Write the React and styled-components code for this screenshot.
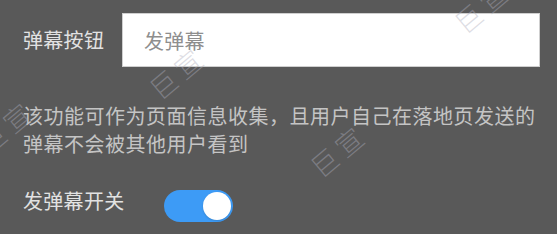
import { useState } from "react";
import styled, { createGlobalStyle } from "styled-components";

const GlobalStyle = createGlobalStyle`
  html, body {
    margin: 0;
    padding: 0;
    background: #595959;
  }
  body {
    font-family: "Noto Sans CJK SC", "Noto Sans", sans-serif;
  }
`;

const Panel = styled.div`
  position: relative;
  width: 557px;
  height: 234px;
  box-sizing: border-box;
  padding: 13px 17px 0 23px;
  overflow: hidden;
`;

const FieldRow = styled.div`
  display: flex;
  align-items: center;
  height: 54px;
`;

const Label = styled.span`
  flex: none;
  width: ${({ $width }) => $width}px;
  font-size: 20px;
  line-height: 28px;
  letter-spacing: 0.3px;
  color: #e2e2e2;
  white-space: nowrap;
`;

const TextInput = styled.input`
  flex: 1;
  min-width: 0;
  height: 54px;
  box-sizing: border-box;
  border: 1px solid #cfcfcf;
  background: #fff;
  padding: 0 0 0 21px;
  margin: 0;
  outline: none;
  font-family: inherit;
  font-size: 20px;
  letter-spacing: 0.3px;
  color: #333;

  &::placeholder {
    color: #8e8e8e;
  }
`;

const Hint = styled.p`
  margin: 35px 0 0;
  font-size: 20px;
  line-height: 28px;
  letter-spacing: 0.5px;
  color: #c4c4c4;
`;

const SwitchRow = styled.div`
  display: flex;
  align-items: flex-start;
  margin-top: 29px;
`;

const Track = styled.button`
  position: relative;
  flex: none;
  width: 69px;
  height: 32px;
  margin-top: 3px;
  padding: 0;
  border: none;
  border-radius: 16px;
  background: ${({ $on }) => ($on ? "#3d9bf6" : "#bfbfbf")};
  cursor: pointer;
`;

const Knob = styled.span`
  position: absolute;
  top: 2px;
  left: ${({ $on }) => ($on ? "39px" : "2px")};
  width: 28px;
  height: 28px;
  border-radius: 50%;
  background: #fff;
  box-shadow: 0 1px 2px rgba(0, 0, 0, 0.15);
  transition: left 0.2s ease;
`;

// faint diagonal "巨宣" stamps over the panel
const Watermark = styled.span`
  position: absolute;
  left: ${({ $x }) => $x}px;
  top: ${({ $y }) => $y}px;
  transform: translate(-50%, -50%) rotate(-40deg);
  font-size: 27px;
  font-weight: 300;
  letter-spacing: 5px;
  color: rgba(175, 175, 190, 0.42);
  pointer-events: none;
  white-space: nowrap;
`;

const marks = [
  { x: 177, y: 72 },
  { x: 338, y: 150 },
  { x: 482, y: 6 },
  { x: 6, y: 126 },
];

const App = () => {
  const [on, setOn] = useState(true);

  return (
    <>
      <GlobalStyle />
      <Panel>
        <FieldRow>
          <Label $width={99}>弹幕按钮</Label>
          <TextInput placeholder="发弹幕" />
        </FieldRow>
        <Hint>该功能可作为页面信息收集，且用户自己在落地页发送的弹幕不会被其他用户看到</Hint>
        <SwitchRow>
          <Label $width={141}>发弹幕开关</Label>
          <Track $on={on} onClick={() => setOn(!on)}>
            <Knob $on={on} />
          </Track>
        </SwitchRow>
        {marks.map((m, i) => (
          <Watermark key={i} $x={m.x} $y={m.y}>巨宣</Watermark>
        ))}
      </Panel>
    </>
  );
};

export default App;
